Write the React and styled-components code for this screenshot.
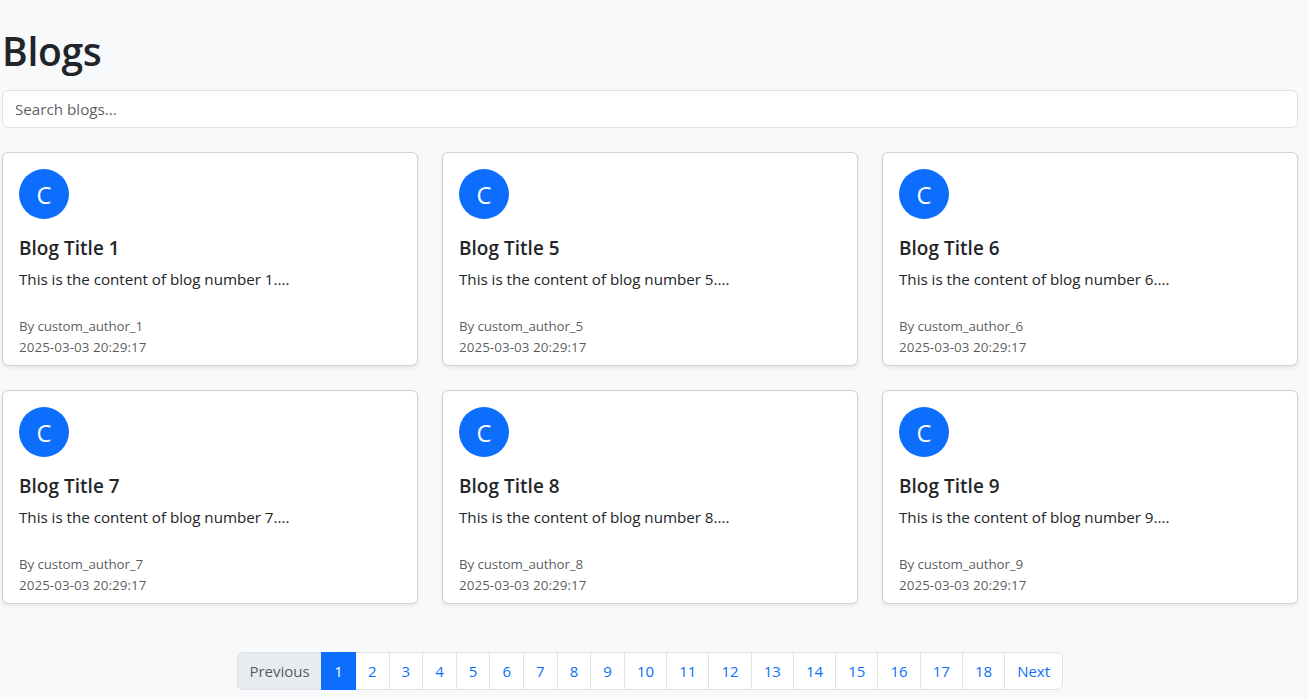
import React from "react";
import styled, { createGlobalStyle } from "styled-components";

const GlobalStyle = createGlobalStyle`
  *, *::before, *::after { box-sizing: border-box; }
  body {
    margin: 0;
    background: #f8f9fa;
    color: #212529;
    font-family: "Segoe UI", "Open Sans", "Noto Sans", sans-serif;
    font-size: 15.2px;
    line-height: 24px;
    overflow: hidden;
  }
`;

const Page = styled.main`
  width: 1300px;
  padding: 26px 2px 0;
`;

const Heading = styled.h1`
  margin: 0;
  padding: 1px 0 15px;
  font-size: 39px;
  line-height: 48px;
  font-weight: 600;
  letter-spacing: -0.3px;
`;

const SearchInput = styled.input`
  display: block;
  width: 100%;
  height: 38px;
  margin: 0 0 24px;
  padding: 6px 12px;
  border: 1px solid #dee2e6;
  border-radius: 6px;
  background: #fff;
  color: #212529;
  font: inherit;
  outline: none;
  &::placeholder {
    color: rgba(33, 37, 41, 0.75);
    opacity: 1;
  }
`;

const Grid = styled.section`
  display: grid;
  grid-template-columns: repeat(3, 1fr);
  gap: 24px;
`;

const Card = styled.article`
  display: flex;
  flex-direction: column;
  height: 214px;
  background: #fff;
  border: 1px solid rgba(0, 0, 0, 0.176);
  border-radius: 6px;
  box-shadow: 0 2px 4px rgba(0, 0, 0, 0.075);
`;

const CardBody = styled.div`
  padding: 16px;
`;

const Avatar = styled.div`
  display: flex;
  align-items: center;
  justify-content: center;
  width: 50px;
  height: 50px;
  margin-bottom: 17px;
  padding-top: 2px;
  border-radius: 50%;
  background: #0d6efd;
  color: #fff;
  font-size: 23.5px;
`;

const CardTitle = styled.h5`
  margin: 0 0 7px;
  font-size: 18.9px;
  line-height: 24px;
  font-weight: 600;
  letter-spacing: 0.07px;
`;

const CardText = styled.p`
  margin: 0;
  letter-spacing: -0.02px;
`;

const CardFooter = styled.footer`
  display: flex;
  flex-direction: column;
  padding: 9px 16px 7px;
  color: rgba(33, 37, 41, 0.75);
  font-size: 13.4px;
  line-height: 21px;
`;

const Author = styled.span`
  letter-spacing: -0.15px;
`;

const PostedAt = styled.time`
  letter-spacing: 0.06px;
`;

const Pagination = styled.nav`
  display: flex;
  justify-content: center;
  width: 1296px;
  margin-top: 48px;
`;

const stateColors = {
  active: "background: #0d6efd; border-color: #0d6efd; color: #fff; z-index: 1;",
  disabled: "background: #e9ecef; border-color: #dee2e6; color: rgba(33, 37, 41, 0.75);",
  normal: "background: #fff; border-color: #dee2e6; color: #0d6efd;",
};

const PageLink = styled.a`
  display: flex;
  align-items: center;
  justify-content: center;
  position: relative;
  flex: none;
  width: ${(p) => p.$width}px;
  height: 38px;
  margin-left: -1px;
  border: 1px solid;
  font-size: 15px;
  text-decoration: none;
  ${(p) => stateColors[p.$state || "normal"]}
  &:first-child {
    margin-left: 0;
    border-radius: 6px 0 0 6px;
  }
  &:last-child {
    border-radius: 0 6px 6px 0;
  }
`;

const posts = [1, 5, 6, 7, 8, 9].map((n) => ({
  id: n,
  title: `Blog Title ${n}`,
  content: `This is the content of blog number ${n}....`,
  author: `custom_author_${n}`,
  date: "2025-03-03 20:29:17",
}));

const pages = Array.from({ length: 18 }, (_, i) => i + 1);

function BlogCard({ post }) {
  return (
    <Card>
      <CardBody>
        <Avatar>{post.author[0].toUpperCase()}</Avatar>
        <CardTitle>{post.title}</CardTitle>
        <CardText>{post.content}</CardText>
      </CardBody>
      <CardFooter>
        <Author>{`By ${post.author}`}</Author>
        <PostedAt>{post.date}</PostedAt>
      </CardFooter>
    </Card>
  );
}

export default function App() {
  return (
    <>
      <GlobalStyle />
      <Page>
        <Heading>Blogs</Heading>
        <SearchInput type="text" placeholder="Search blogs..." />
        <Grid>
          {posts.map((post) => (
            <BlogCard key={post.id} post={post} />
          ))}
        </Grid>
        <Pagination>
          <PageLink $width={85.4} $state="disabled">Previous</PageLink>
          {pages.map((n) => (
            <PageLink
              key={n}
              $width={n < 10 ? 34.625 : 43.25}
              $state={n === 1 ? "active" : "normal"}
            >
              {n}
            </PageLink>
          ))}
          <PageLink $width={59}>Next</PageLink>
        </Pagination>
      </Page>
    </>
  );
}
